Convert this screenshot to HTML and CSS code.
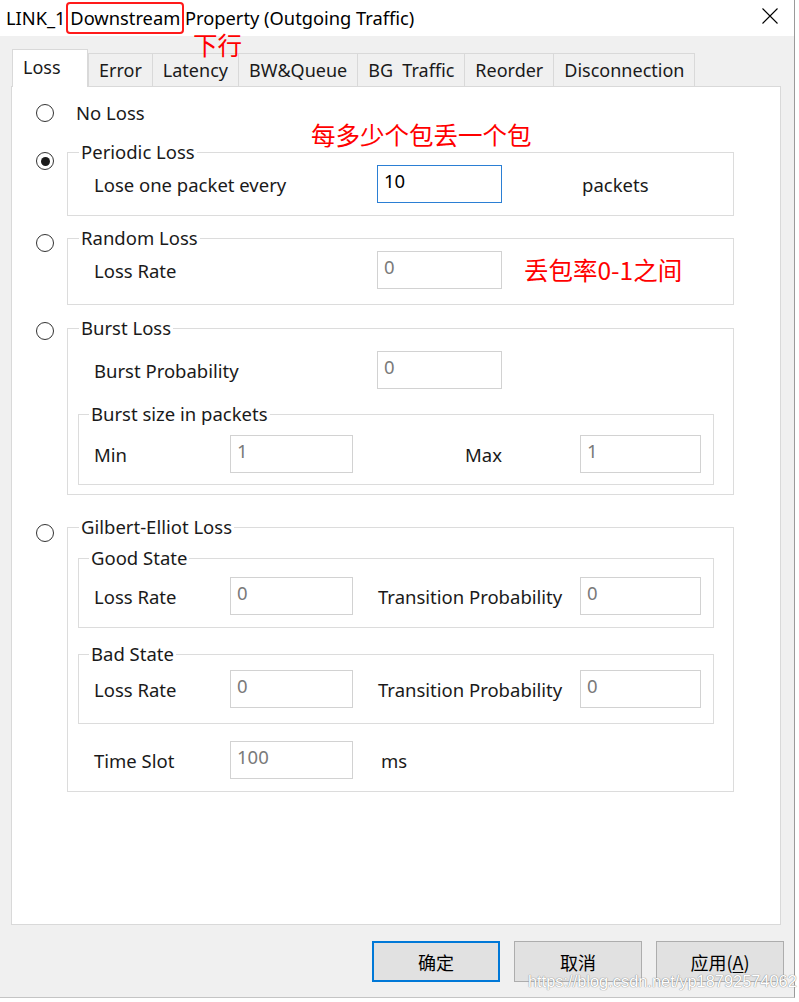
FILE: index.html
```html
<!DOCTYPE html>
<html>
<head>
<meta charset="utf-8">
<link rel="stylesheet" href="styles.css">
</head>
<body>
<div class="dialog">
  <div class="titlebar">
    <span class="title">LINK_1 <span class="hl">Downstream</span> Property (Outgoing Traffic)</span>
    <span class="note note-title">下行</span>
    <svg class="close" width="16" height="16" viewBox="0 0 16 16"><path d="M0.5 0.5 L15.5 15.5 M15.5 0.5 L0.5 15.5" stroke="#000" stroke-width="1.1" fill="none"/></svg>
  </div>
  <div class="body">
    <div class="tabs">
      <div class="tab active">Loss</div>
      <div class="tab">Error</div>
      <div class="tab">Latency</div>
      <div class="tab">BW&amp;Queue</div>
      <div class="tab">BG&nbsp; Traffic</div>
      <div class="tab">Reorder</div>
      <div class="tab">Disconnection</div>
    </div>
    <div class="panel">
      <span class="note note-periodic">每多少个包丢一个包</span>

      <div class="opt opt-none">
        <span class="radio"></span>
        <span class="label">No Loss</span>
      </div>

      <div class="opt opt-periodic">
        <span class="radio checked"></span>
        <fieldset class="group">
          <legend>Periodic Loss</legend>
          <div class="row">
            <span class="lbl lbl-wide">Lose one packet every</span>
            <span class="input focus">10</span>
            <span class="unit">packets</span>
          </div>
        </fieldset>
      </div>

      <div class="opt opt-random">
        <span class="radio"></span>
        <fieldset class="group">
          <legend>Random Loss</legend>
          <div class="row">
            <span class="lbl lbl-wide">Loss Rate</span>
            <span class="input">0</span>
            <span class="note note-rate">丢包率0-1之间</span>
          </div>
        </fieldset>
      </div>

      <div class="opt opt-burst">
        <span class="radio"></span>
        <fieldset class="group nested">
          <legend>Burst Loss</legend>
          <div class="row row-indent">
            <span class="lbl lbl-wide2">Burst Probability</span>
            <span class="input">0</span>
          </div>
          <fieldset class="sub sub-burst">
            <legend>Burst size in packets</legend>
            <div class="pair">
              <span class="lbl">Min</span>
              <span class="input small">1</span>
              <span class="lbl lbl-right">Max</span>
              <span class="input small2">1</span>
            </div>
          </fieldset>
        </fieldset>
      </div>

      <div class="opt opt-ge">
        <span class="radio"></span>
        <fieldset class="group nested">
          <legend>Gilbert-Elliot Loss</legend>
          <fieldset class="sub sub-good">
            <legend>Good State</legend>
            <div class="pair">
              <span class="lbl">Loss Rate</span>
              <span class="input small">0</span>
              <span class="lbl lbl-tp">Transition Probability</span>
              <span class="input small2">0</span>
            </div>
          </fieldset>
          <fieldset class="sub sub-bad">
            <legend>Bad State</legend>
            <div class="pair">
              <span class="lbl">Loss Rate</span>
              <span class="input small">0</span>
              <span class="lbl lbl-tp">Transition Probability</span>
              <span class="input small2">0</span>
            </div>
          </fieldset>
          <div class="pair slot">
            <span class="lbl">Time Slot</span>
            <span class="input small">100</span>
            <span class="unit unit-ms">ms</span>
          </div>
        </fieldset>
      </div>
    </div>
    <div class="buttons">
      <div class="btn default">确定</div>
      <div class="btn">取消</div>
      <div class="btn">应用(<u>A</u>)</div>
    </div>
    <span class="watermark">https://blog.csdn.net/yp18792574062</span>
  </div>
</div>
</body>
</html>
```
FILE: styles.css
```css
html, body {
  margin: 0;
  padding: 0;
}
body {
  background: #ffffff;
  width: 799px;
  height: 1002px;
  overflow: hidden;
  font-family: "Noto Sans", "Noto Sans CJK SC", sans-serif;
  color: #1a1a1a;
  position: relative;
}
.dialog {
  width: 795px;
  height: 998px;
  display: flex;
  flex-direction: column;
  border-right: 1px solid #9a9a9a;
  border-bottom: 1px solid #c4c4c4;
  box-sizing: border-box;
  position: relative;
}
.titlebar {
  height: 36px;
  background: #fff;
  display: flex;
  align-items: center;
  padding-left: 6px;
  position: relative;
  font-size: 18.3px;
  color: #000;
}
.title {
  white-space: nowrap;
  line-height: 24px;
}
.hl {
  display: inline-block;
  border: 2px solid #ff1a1a;
  border-radius: 4px;
  padding: 2px 2px;
  margin: -5px -4px;
  line-height: 24px;
}
.close {
  position: absolute;
  left: 762px;
  top: 8px;
}
.note {
  color: #ff0000;
  font-family: "Noto Sans CJK SC", "Noto Sans", sans-serif;
  font-size: 24.5px;
  line-height: 28px;
  white-space: nowrap;
}
.note-title {
  position: absolute;
  left: 193px;
  top: 32px;
  line-height: 26px;
  z-index: 5;
}
.body {
  flex: 1;
  background: #f0f0f0;
  padding: 14px 0 0 11px;
  position: relative;
}
.tabs {
  display: flex;
  align-items: flex-end;
  margin-left: 1px;
  height: 36px;
  font-size: 18px;
}
.tab {
  height: 33px;
  box-sizing: border-box;
  border: 1px solid #d9d9d9;
  border-bottom: none;
  margin-left: -1px;
  padding: 0 10px;
  display: flex;
  align-items: center;
  background: #f0f0f0;
  white-space: nowrap;
}
.tab:first-child {
  margin-left: 0;
}
.tab.active {
  height: 38px;
  background: #fff;
  margin-bottom: -1px;
  padding: 0 0 4px 10px;
  width: 76px;
  position: relative;
  z-index: 2;
  margin-right: 1px;
}
.panel {
  width: 770px;
  height: 839px;
  box-sizing: border-box;
  background: #fff;
  border: 1px solid #d9d9d9;
  padding-top: 14px;
  position: relative;
  font-size: 18.5px;
}
.note-periodic {
  position: absolute;
  left: 299px;
  top: 34px;
}
.opt {
  display: flex;
  align-items: flex-start;
}
.radio {
  width: 18px;
  height: 18px;
  box-sizing: border-box;
  border: 1.5px solid #333;
  border-radius: 50%;
  margin-left: 24px;
  margin-right: 13px;
  margin-top: 9px;
  flex: none;
  display: flex;
  align-items: center;
  justify-content: center;
}
.radio.checked::after {
  content: "";
  width: 9px;
  height: 9px;
  border-radius: 50%;
  background: #1a1a1a;
}
.opt-none {
  height: 24px;
  align-items: center;
}
.opt-none .radio {
  margin-top: 0;
}
.opt-none .label {
  margin-left: 9px;
  line-height: 24px;
}
.opt-periodic { margin-top: 15px; }
.opt-periodic .radio { margin-top: 12px; }
.opt-random { margin-top: 10px; }
.opt-random .radio { margin-top: 8px; }
.opt-burst { margin-top: 11px; }
.opt-burst .radio { margin-top: 6px; }
.opt-ge { margin-top: 20px; }
.group, .sub {
  margin: 0;
  padding: 0;
  border: 1px solid #dcdcdc;
  min-inline-size: 0;
  box-sizing: border-box;
}
.group {
  width: 667px;
}
.group > legend {
  margin-left: 11px;
  padding: 0 2px;
  line-height: 24px;
}
.nested > legend {
  margin-left: 1px;
}
.group .row {
  display: flex;
  align-items: center;
  padding-left: 26px;
}
.opt-periodic .group { padding: 1px 0 12px; }
.opt-random .group { padding: 1px 0 15px; }
.lbl {
  white-space: nowrap;
}
.lbl-wide { width: 283px; }
.lbl-wide2 { width: 283px; }
.input {
  box-sizing: border-box;
  width: 125px;
  height: 38px;
  border: 1.5px solid #d2d2d2;
  color: #7a7a7a;
  padding: 3px 0 0 6px;
  line-height: 24px;
  background: #fff;
  flex: none;
}
.input.focus {
  border-color: #2b7fd4;
  color: #000;
}
.unit {
  margin-left: 80px;
}
.note-rate {
  margin-left: 22px;
}
.nested {
  padding: 0 0 9px 10px;
}
.opt-ge .nested {
  padding-bottom: 12px;
}
.row-indent {
  padding-left: 16px !important;
  margin-top: 11px;
}
.sub {
  width: 636px;
}
.sub > legend {
  margin-left: 10px;
  padding: 0 2px;
  line-height: 24px;
}
.pair {
  display: flex;
  align-items: center;
  padding-left: 15px;
}
.pair > .lbl:first-child {
  width: 136px;
}
.input.small { width: 123px; }
.input.small2 { width: 121px; }
.lbl-right {
  margin-left: 112px;
  width: 115px;
}
.lbl-tp {
  margin-left: 25px;
  width: 202px;
}
.sub-burst {
  margin-top: 13px;
  padding: 9px 0 11px;
}
.sub-good {
  margin-top: 7px;
  padding: 7px 0 12px;
}
.sub-bad {
  margin-top: 14px;
  padding: 4px 0 15px;
}
.slot {
  margin-top: 17px;
  padding-left: 16px;
}
.unit-ms {
  margin-left: 28px;
}
.buttons {
  display: flex;
  justify-content: flex-end;
  gap: 14px;
  margin-top: 16px;
  padding-right: 10px;
}
.btn {
  width: 128px;
  height: 41px;
  box-sizing: border-box;
  border: 1px solid #adadad;
  background: #e1e1e1;
  display: flex;
  align-items: center;
  justify-content: center;
  font-family: "Noto Sans CJK SC", "Noto Sans", sans-serif;
  font-size: 18px;
  color: #000;
}
.btn.default {
  border: 2px solid #0078d7;
}
.btn u {
  text-underline-offset: 2px;
}
.watermark {
  position: absolute;
  left: 528px;
  top: 936px;
  font-family: "Liberation Sans", sans-serif;
  font-size: 16.4px;
  color: #ffffff;
  text-shadow: 0 0 1px #8a8a8a, 0 0 1px #8a8a8a;
  white-space: nowrap;
}
```
